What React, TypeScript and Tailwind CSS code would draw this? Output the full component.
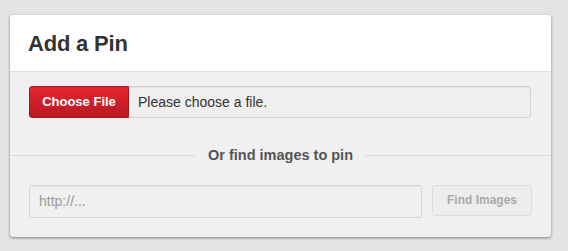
export default function App() {
  return (
    <div
      className="min-h-[251px] w-[568px] bg-[#e3e4e3] pt-[15px] pl-[10px]"
      style={{ fontFamily: '"Liberation Sans", Arial, sans-serif' }}
    >
      <div className="w-[541px] overflow-hidden rounded-[3px] bg-[#f0f0f0] shadow-[0_1px_3px_rgba(0,0,0,0.45)]">
        <div className="flex h-[57px] items-center border-b border-[#dedede] bg-white pl-[18px]">
          <h1 className="pt-[2px] text-[22px] font-bold leading-none tracking-[-0.2px] text-[#333]">
            Add a Pin
          </h1>
        </div>

        <div className="px-[19px] pt-[14px]">
          <div className="flex h-[32px] w-[502px] items-stretch rounded-[3px] border border-[#d2d2d2] bg-[#efefef] shadow-[inset_0_1px_1px_rgba(0,0,0,0.05)]">
            <button className="-m-px flex w-[100px] items-center justify-center rounded-l-[3px] border border-[#a9151c] bg-gradient-to-b from-[#e5262f] to-[#b81922] text-[13px] font-bold text-white">
              Choose File
            </button>
            <span className="flex items-center pl-[10px] text-[14px] text-[#333]">
              Please choose a file.
            </span>
          </div>
        </div>

        <div className="mt-[27px] flex items-center">
          <div className="h-px flex-1 bg-[#dcdcdc]" />
          <span className="px-[12px] text-[14.5px] font-bold text-[#555]">
            Or find images to pin
          </span>
          <div className="h-px flex-1 bg-[#dcdcdc]" />
        </div>

        <div className="flex gap-[10px] px-[19px] pt-[18px] pb-[19px]">
          <div className="flex h-[33px] w-[393px] items-center rounded-[3px] border border-[#d6d6d6] bg-[#f0f0f0] pl-[9px] text-[14px] text-[#999] shadow-[inset_0_1px_1px_rgba(0,0,0,0.04)]">
            http://...
          </div>
          <button className="flex h-[31px] w-[100px] items-center justify-center rounded-[3px] border border-[#dcdcdc] bg-[#ededed] text-[12px] font-bold text-[#aaa]">
            Find Images
          </button>
        </div>
      </div>
    </div>
  );
}
